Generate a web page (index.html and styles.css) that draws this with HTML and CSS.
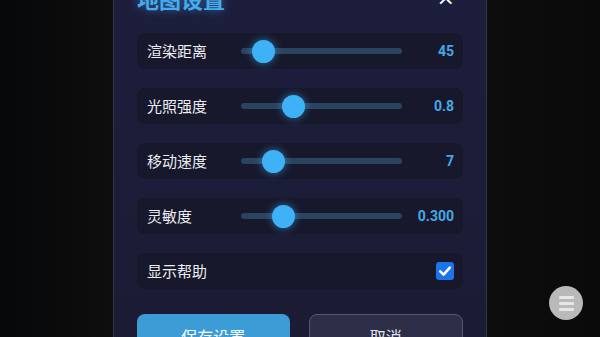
FILE: index.html
```html
<!DOCTYPE html>
<html lang="zh">
<head>
<meta charset="utf-8">
<link rel="stylesheet" href="styles.css">
</head>
<body>
<div class="stage">
  <div class="panel">
    <div class="header">
      <h1 class="title">地图设置</h1>
      <span class="close">×</span>
    </div>
    <div class="rows">
      <div class="row">
        <span class="label">渲染距离</span>
        <div class="track"><span class="thumb" style="left:22px"></span></div>
        <span class="value">45</span>
      </div>
      <div class="row">
        <span class="label">光照强度</span>
        <div class="track"><span class="thumb" style="left:52px"></span></div>
        <span class="value">0.8</span>
      </div>
      <div class="row">
        <span class="label">移动速度</span>
        <div class="track"><span class="thumb" style="left:32px"></span></div>
        <span class="value">7</span>
      </div>
      <div class="row">
        <span class="label">灵敏度</span>
        <div class="track"><span class="thumb" style="left:42px"></span></div>
        <span class="value">0.300</span>
      </div>
      <div class="row row-check">
        <span class="label">显示帮助</span>
        <span class="checkbox">
          <svg viewBox="0 0 18 18" width="18" height="18"><path d="M4.2 9.4 L7.6 12.6 L13.8 5.6" fill="none" stroke="#fff" stroke-width="2.6" stroke-linecap="round" stroke-linejoin="round"/></svg>
        </span>
      </div>
    </div>
    <div class="buttons">
      <button class="btn btn-save">保存设置</button>
      <button class="btn btn-cancel">取消</button>
    </div>
  </div>
  <div class="fab"><span></span><span></span><span></span></div>
</div>
</body>
</html>
```
FILE: styles.css
```css
html, body {
  margin: 0;
  padding: 0;
  width: 600px;
  height: 337px;
  overflow: hidden;
  background: #0c0c0d;
  font-family: "Noto Sans CJK SC", "Noto Sans", sans-serif;
}
.stage {
  width: 600px;
  height: 337px;
  overflow: hidden;
  background: linear-gradient(90deg, #060708 0%, #0e0e0f 18%, #0d0d0e 82%, #0a0a0b 100%);
}
.panel {
  box-sizing: border-box;
  width: 374px;
  margin-left: 113px;
  margin-top: -17px;
  height: 380px;
  padding: 0 23px;
  background: linear-gradient(180deg, #1d1e3d 0%, #1c1d38 50%, #1b1c33 100%);
  border-left: 1px solid #34354f;
  border-right: 1px solid #34354f;
}
.header {
  height: 30px;
  display: flex;
  align-items: center;
  justify-content: space-between;
  margin-bottom: 20px;
}
.title {
  margin: 0;
  font-size: 22px;
  line-height: 30px;
  font-weight: 700;
  color: #45acef;
  text-shadow: 0 0 8px rgba(69, 172, 239, 0.55);
}
.close {
  color: #ffffff;
  font-family: "DejaVu Sans", sans-serif;
  font-size: 22px;
  line-height: 30px;
  margin-right: 8px;
}
.rows {
  display: flex;
  flex-direction: column;
  gap: 19px;
}
.row {
  box-sizing: border-box;
  height: 36px;
  border-radius: 8px;
  background: #17182c;
  padding: 0 9px 0 10px;
  display: grid;
  grid-template-columns: 94px 161px 1fr;
  align-items: center;
}
.row-check {
  grid-template-columns: 1fr auto;
}
.label {
  color: #ecedf3;
  font-size: 15px;
  line-height: 20px;
}
.track {
  position: relative;
  height: 6px;
  border-radius: 3px;
  background: #2a4460;
}
.thumb {
  position: absolute;
  top: 50%;
  width: 23px;
  height: 23px;
  margin: -11.5px 0 0 -11.5px;
  border-radius: 50%;
  background: #3fb1f6;
  box-shadow: 0 0 8px rgba(63, 177, 246, 0.6);
}
.value {
  text-align: right;
  color: #45a9e6;
  font-family: "Roboto", "Liberation Sans", sans-serif;
  font-weight: 700;
  font-size: 14px;
}
.checkbox {
  width: 18px;
  height: 18px;
  border-radius: 3px;
  background: #1b74ea;
  display: flex;
}
.buttons {
  display: flex;
  gap: 19px;
  margin-top: 25px;
}
.btn {
  flex: 1;
  height: 44px;
  border-radius: 8px;
  font-family: "Noto Sans CJK SC", "Noto Sans", sans-serif;
  font-size: 16px;
  padding: 0;
}
.btn-save {
  background: #3b9cd6;
  color: #ffffff;
  border: none;
}
.btn-cancel {
  background: #2d2e47;
  color: #e3e3ea;
  border: 1px solid #56576e;
}
.fab {
  position: fixed;
  left: 549px;
  top: 286px;
  width: 34px;
  height: 34px;
  border-radius: 50%;
  background: #b9b9b9;
  display: flex;
  flex-direction: column;
  align-items: center;
  justify-content: center;
  gap: 3px;
}
.fab span {
  width: 15px;
  height: 3px;
  background: #e6e6e6;
  border-radius: 1px;
}
```
